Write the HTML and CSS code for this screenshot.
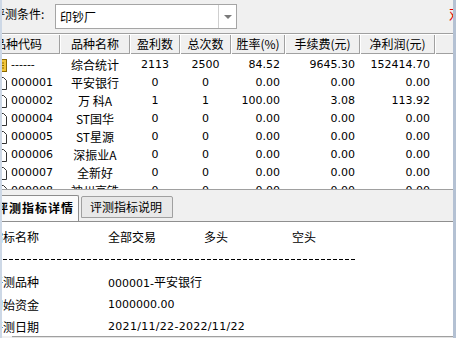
FILE: index.html
```html
<!DOCTYPE html>
<html>
<head>
<meta charset="utf-8">
<link rel="stylesheet" href="styles.css">
</head>
<body>
<div class="frame">
  <div class="edge edge-l"></div>
  <div class="main">
    <div class="inner">
      <div class="toolbar">
        <span class="lbl">评测条件:</span>
        <div class="combo">
          <span class="combo-text">印钞厂</span>
          <span class="combo-btn"><span class="arrow"></span></span>
        </div>
        <span class="flag">双</span>
      </div>

      <div class="list">
        <div class="grid hdr">
          <div class="hc h1">品种代码</div>
          <div class="hc">品种名称</div>
          <div class="hc">盈利数</div>
          <div class="hc">总次数</div>
          <div class="hc">胜率(%)</div>
          <div class="hc">手续费(元)</div>
          <div class="hc">净利润(元)</div>
          <div class="hc">收益率(%)</div>
        </div>
        <div class="rows">
          <div class="grid row">
            <div class="c c1"><svg class="ico" width="12" height="13" viewBox="0 0 12 13"><rect x="0.5" y="0.5" width="11" height="12" fill="#f2c53a" stroke="#8d6a00"/><path d="M3 4h6M3 6.5h6M3 9h6" stroke="#8d6a00"/></svg><span class="n">------</span></div>
            <div class="c ctr">综合统计</div>
            <div class="c ctr n">2113</div>
            <div class="c ctr n">2500</div>
            <div class="c rt n">84.52</div>
            <div class="c rt n">9645.30</div>
            <div class="c rt n">152414.70</div>
            <div class="c"></div>
          </div>
          <div class="grid row">
            <div class="c c1"><svg class="ico" width="12" height="13" viewBox="0 0 12 13"><path d="M0.5 0.5h8l3 3v9h-11z" fill="#fff" stroke="#333"/></svg><span class="n">000001</span></div>
            <div class="c ctr">平安银行</div>
            <div class="c ctr n">0</div>
            <div class="c ctr n">0</div>
            <div class="c rt n">0.00</div>
            <div class="c rt n">0.00</div>
            <div class="c rt n">0.00</div>
            <div class="c"></div>
          </div>
          <div class="grid row">
            <div class="c c1"><svg class="ico" width="12" height="13" viewBox="0 0 12 13"><path d="M0.5 0.5h8l3 3v9h-11z" fill="#fff" stroke="#333"/></svg><span class="n">000002</span></div>
            <div class="c ctr">万 科A</div>
            <div class="c ctr n">1</div>
            <div class="c ctr n">1</div>
            <div class="c rt n">100.00</div>
            <div class="c rt n">3.08</div>
            <div class="c rt n">113.92</div>
            <div class="c"></div>
          </div>
          <div class="grid row">
            <div class="c c1"><svg class="ico" width="12" height="13" viewBox="0 0 12 13"><path d="M0.5 0.5h8l3 3v9h-11z" fill="#fff" stroke="#333"/></svg><span class="n">000004</span></div>
            <div class="c ctr">ST国华</div>
            <div class="c ctr n">0</div>
            <div class="c ctr n">0</div>
            <div class="c rt n">0.00</div>
            <div class="c rt n">0.00</div>
            <div class="c rt n">0.00</div>
            <div class="c"></div>
          </div>
          <div class="grid row">
            <div class="c c1"><svg class="ico" width="12" height="13" viewBox="0 0 12 13"><path d="M0.5 0.5h8l3 3v9h-11z" fill="#fff" stroke="#333"/></svg><span class="n">000005</span></div>
            <div class="c ctr">ST星源</div>
            <div class="c ctr n">0</div>
            <div class="c ctr n">0</div>
            <div class="c rt n">0.00</div>
            <div class="c rt n">0.00</div>
            <div class="c rt n">0.00</div>
            <div class="c"></div>
          </div>
          <div class="grid row">
            <div class="c c1"><svg class="ico" width="12" height="13" viewBox="0 0 12 13"><path d="M0.5 0.5h8l3 3v9h-11z" fill="#fff" stroke="#333"/></svg><span class="n">000006</span></div>
            <div class="c ctr">深振业A</div>
            <div class="c ctr n">0</div>
            <div class="c ctr n">0</div>
            <div class="c rt n">0.00</div>
            <div class="c rt n">0.00</div>
            <div class="c rt n">0.00</div>
            <div class="c"></div>
          </div>
          <div class="grid row">
            <div class="c c1"><svg class="ico" width="12" height="13" viewBox="0 0 12 13"><path d="M0.5 0.5h8l3 3v9h-11z" fill="#fff" stroke="#333"/></svg><span class="n">000007</span></div>
            <div class="c ctr">全新好</div>
            <div class="c ctr n">0</div>
            <div class="c ctr n">0</div>
            <div class="c rt n">0.00</div>
            <div class="c rt n">0.00</div>
            <div class="c rt n">0.00</div>
            <div class="c"></div>
          </div>
          <div class="grid row">
            <div class="c c1"><svg class="ico" width="12" height="13" viewBox="0 0 12 13"><path d="M0.5 0.5h8l3 3v9h-11z" fill="#fff" stroke="#333"/></svg><span class="n">000008</span></div>
            <div class="c ctr">神州高铁</div>
            <div class="c ctr n">0</div>
            <div class="c ctr n">0</div>
            <div class="c rt n">0.00</div>
            <div class="c rt n">0.00</div>
            <div class="c rt n">0.00</div>
            <div class="c"></div>
          </div>
        </div>
      </div>

      <div class="tabbar">
        <div class="tab active">评测指标详情</div>
        <div class="tab">评测指标说明</div>
      </div>

      <div class="detail">
        <div class="drow">
          <span>指标名称</span><span>全部交易</span><span>多头</span><span>空头</span>
        </div>
        <div class="drow dashrow"><span class="dash"></span></div>
        <div class="drow">
          <span>评测品种</span><span class="span3"><span class="n">000001-</span>平安银行</span>
        </div>
        <div class="drow">
          <span>初始资金</span><span class="span3 n">1000000.00</span>
        </div>
        <div class="drow">
          <span>评测日期</span><span class="span3 n date">2021/11/22-2022/11/22</span>
        </div>
      </div>
      <div class="bottombar"></div>
    </div>
  </div>
  <div class="edge edge-r"></div>
</div>
</body>
</html>
```

FILE: styles.css
```css
* { box-sizing: border-box; }
html, body { margin: 0; padding: 0; }
body {
  width: 456px;
  height: 338px;
  overflow: hidden;
  background: #f0f0f0;
  font-family: "Noto Sans CJK SC", sans-serif;
  font-size: 12px;
  color: #000;
}
.n { font-family: "DejaVu Sans", sans-serif; font-size: 11px; }

.frame { display: flex; width: 456px; height: 338px; }
.edge { flex: none; height: 338px; }
.edge-l { width: 2px; background: #cdd8e6; }
.edge-r { width: 3px; background: #b4c1d3; }
.main { flex: 1; overflow: hidden; height: 338px; }
.inner { width: 480px; margin-left: -14px; }

/* toolbar */
.toolbar {
  height: 33px;
  padding-top: 4px;
  display: flex;
  align-items: flex-start;
}
.lbl { width: 67px; padding-left: 5px; line-height: 20px; white-space: nowrap; }
.combo {
  width: 182px;
  height: 25px;
  border: 1px solid #a5a5a5;
  background: #fff;
  display: flex;
}
.combo-text { flex: 1; line-height: 23px; padding-left: 4px; }
.combo-btn {
  width: 18px;
  border-left: 1px solid #cfcfcf;
  display: flex;
  align-items: center;
  justify-content: center;
}
.arrow {
  width: 0; height: 0;
  border-left: 4px solid transparent;
  border-right: 4px solid transparent;
  border-top: 4px solid #7a7a7a;
  margin-top: 1px;
}
.flag { margin-left: 212px; color: #e00000; line-height: 20px; font-size: 13px; }

/* list */
.grid {
  display: grid;
  grid-template-columns: 72px 70px 50px 51px 54px 75px 75px 100px;
}
.hdr { border-top: 1px solid #a0a0a0; background: #f0f0f0; }
.hc {
  height: 20px;
  line-height: 19px;
  text-align: center;
  white-space: nowrap;
  overflow: hidden;
  box-shadow: inset 1px 1px #ffffff, inset -1px -1px #a0a0a0;
}
.hc.h1 { text-align: left; padding-left: 6px; }
.rows {
  height: 135px;
  overflow: hidden;
  background: #fff;
  padding-top: 2px;
}
.row { height: 18px; }
.c { line-height: 18px; white-space: nowrap; }
.c1 { display: flex; align-items: center; padding-left: 7px; }
.ico { flex: none; margin-right: 4px; }
.ctr { text-align: center; }
.rt { text-align: right; padding-right: 5px; }

/* tabs */
.tabbar {
  height: 33px;
  border-top: 1px solid #a0a0a0;
  border-bottom: 1px solid #8f8f8f;
  background: #f0f0f0;
  display: flex;
  align-items: flex-end;
  gap: 2px;
}
.tab {
  height: 22px;
  margin-bottom: 3px;
  line-height: 20px;
  padding: 0 10px 0 8px;
  border: 1px solid #a0a0a0;
  border-radius: 2px 2px 0 0;
  background: #e8e8e8;
  white-space: nowrap;
}
.tab.active {
  height: 26px;
  margin-bottom: 0;
  line-height: 24px;
  padding: 0 4px 0 7px;
  border-color: #8c8c8c;
  border-bottom: none;
  background: #fbfbfb;
  font-weight: bold;
  letter-spacing: 1px;
}

/* detail */
.detail {
  height: 114px;
  overflow: hidden;
  background: #fff;
  padding: 4px 0 0 3px;
}
.drow {
  display: grid;
  grid-template-columns: 117px 96px 88px 1fr;
  line-height: 22.5px;
  height: 22.5px;
  white-space: nowrap;
}
.span3 { grid-column: 2 / 5; }
.date { letter-spacing: 0.3px; }
.dashrow { align-items: center; }
.dash {
  grid-column: 1 / 5;
  display: block;
  width: 366px;
  height: 1px;
  background: repeating-linear-gradient(90deg, #000 0 4px, transparent 4px 6px);
}
.bottombar {
  height: 2px;
  margin-left: 24px;
  border-top: 1px solid #a0a0a0;
  background: #e4e4e4;
}
```
